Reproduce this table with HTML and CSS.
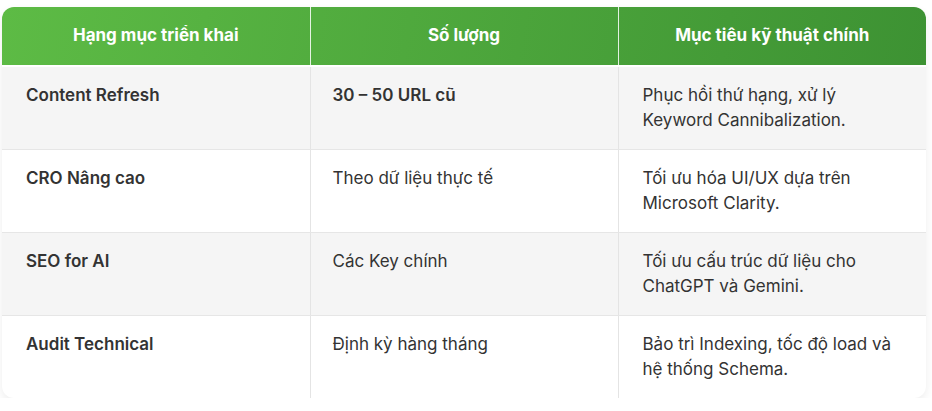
FILE: index.html
```html
<!DOCTYPE html>
<html lang="vi">
<head>
<meta charset="utf-8">
<title>Bảng triển khai</title>
<link rel="stylesheet" href="styles.css">
</head>
<body>
<div class="wrap">
  <table class="plan">
    <thead>
      <tr>
        <th>Hạng mục triển khai</th>
        <th>Số lượng</th>
        <th>Mục tiêu kỹ thuật chính</th>
      </tr>
    </thead>
    <tbody>
      <tr>
        <td class="strong">Content Refresh</td>
        <td class="strong">30 – 50 URL cũ</td>
        <td>Phục hồi thứ hạng, xử lý Keyword Cannibalization.</td>
      </tr>
      <tr>
        <td class="strong">CRO Nâng cao</td>
        <td>Theo dữ liệu thực tế</td>
        <td>Tối ưu hóa UI/UX dựa trên Microsoft Clarity.</td>
      </tr>
      <tr>
        <td class="strong">SEO for AI</td>
        <td>Các Key chính</td>
        <td>Tối ưu cấu trúc dữ liệu cho ChatGPT và Gemini.</td>
      </tr>
      <tr>
        <td class="strong">Audit Technical</td>
        <td>Định kỳ hàng tháng</td>
        <td>Bảo trì Indexing, tốc độ load và hệ thống Schema.</td>
      </tr>
    </tbody>
  </table>
</div>
</body>
</html>
```

FILE: styles.css
```css
html, body {
  margin: 0;
  padding: 0;
  background: #ffffff;
}

body {
  font-family: Inter, "Noto Sans", "Liberation Sans", sans-serif;
  color: #333333;
}

.wrap {
  margin: 7px 6px 0 2px;
  border-radius: 12px;
  overflow: hidden;
  box-shadow: 0 4px 10px rgba(0, 0, 0, 0.07);
  background: #ffffff;
}

.plan {
  width: 100%;
  border-collapse: collapse;
  table-layout: fixed;
}

.plan thead tr {
  background: linear-gradient(100deg, #5dbb45 0%, #3d9233 100%);
}

.plan th {
  background: transparent;
  color: #ffffff;
  font-size: 17px;
  font-weight: 700;
  line-height: 25.5px;
  padding: 16px 24px;
  text-align: center;
  border-left: 1px solid rgba(255, 255, 255, 0.85);
  border-bottom: 2px solid #ffffff;
}

.plan th:first-child,
.plan td:first-child {
  border-left: none;
}

.plan td {
  font-size: 17px;
  line-height: 25.5px;
  padding: 16px 24px 15px;
  vertical-align: top;
  text-align: left;
  border-left: 1px solid #e4e4e4;
  border-bottom: 1px solid #e6e6e6;
}

.plan td:nth-child(2) {
  padding-left: 22px;
}

.plan tbody tr:nth-child(odd) td {
  background: #f5f5f5;
}

.plan tbody tr:last-child td {
  border-bottom: none;
}

.plan td.strong {
  font-weight: 600;
}
```
